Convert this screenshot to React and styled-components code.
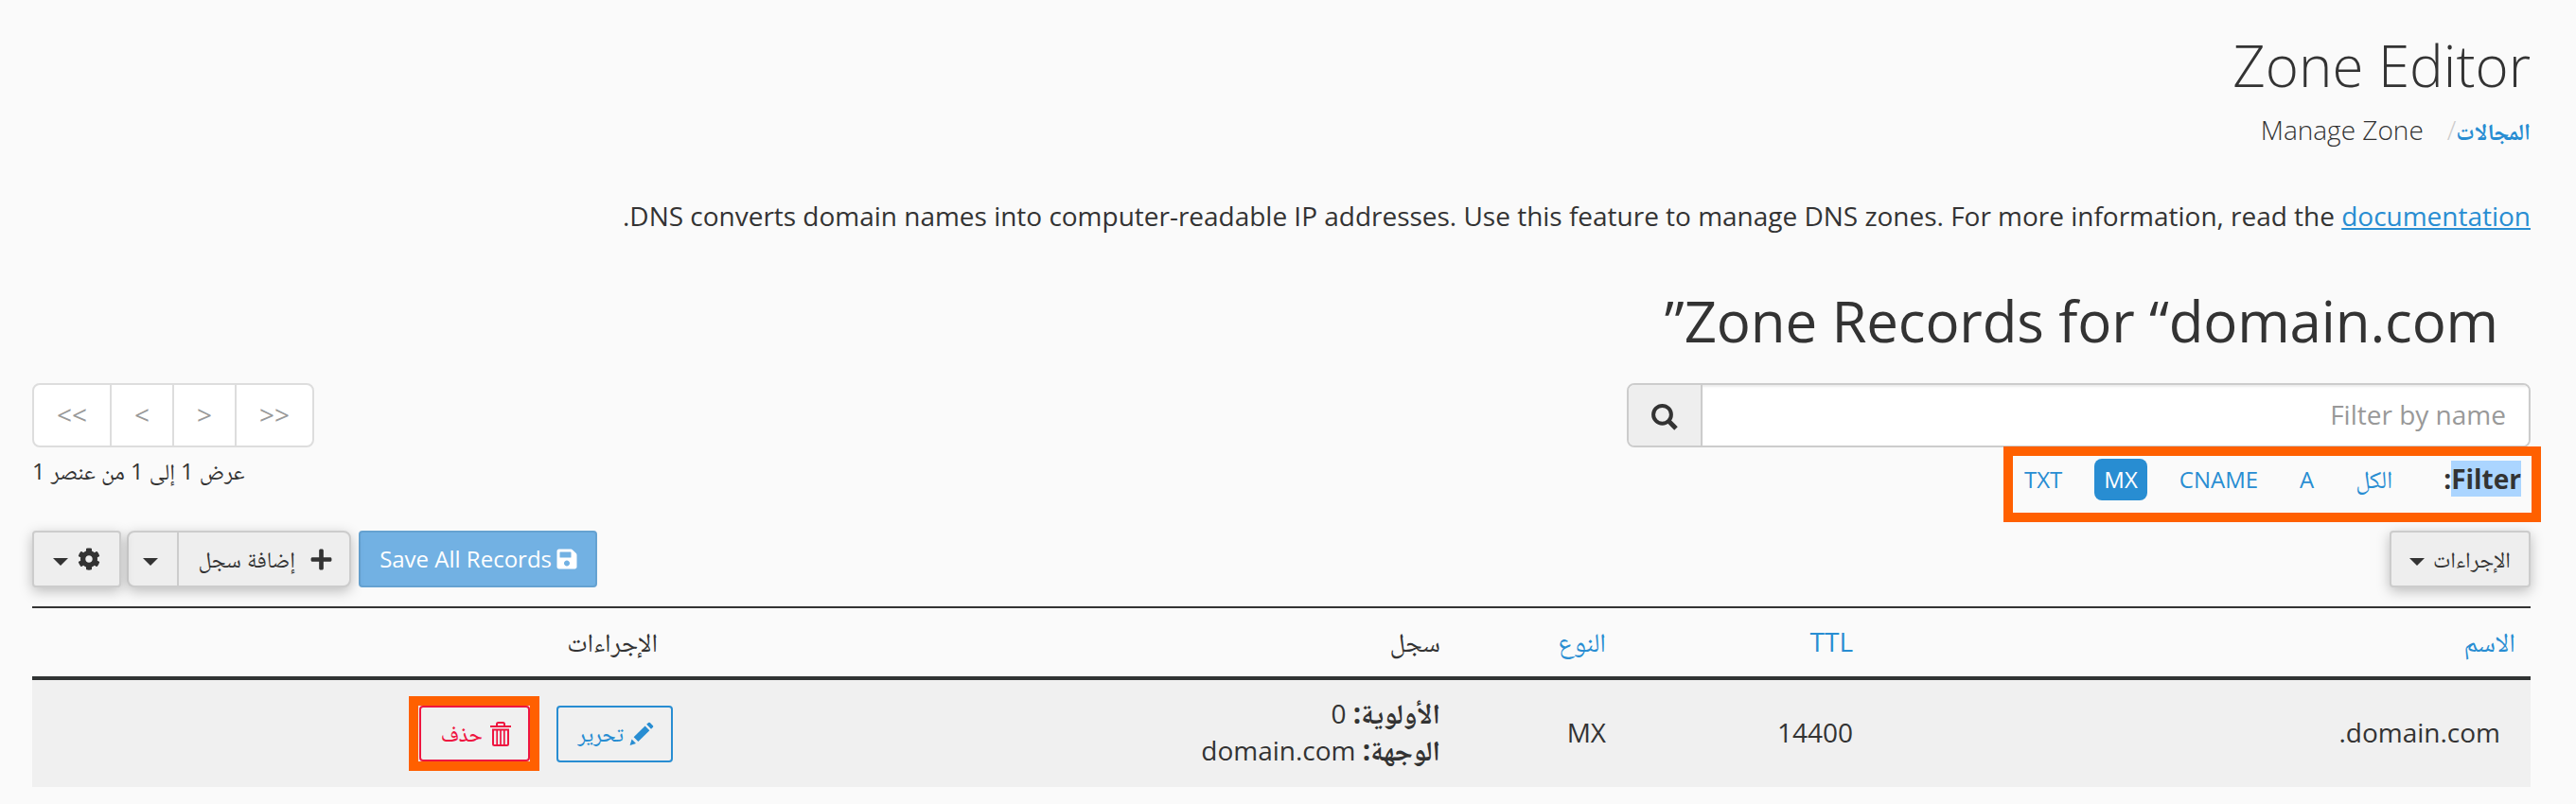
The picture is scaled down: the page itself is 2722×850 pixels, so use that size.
import React from 'react'
import styled, { createGlobalStyle, css } from 'styled-components'
import { FaCog, FaPlus, FaSave } from 'react-icons/fa'

const blue = '#288dd2'
const dark = '#333333'
const orange = '#ff6000'

const SearchIcon = () => (
  <svg width="30" height="30" viewBox="0 0 30 30" fill="none" stroke={dark}>
    <circle cx="12.5" cy="12.3" r="9.4" strokeWidth="4" />
    <path d="M18.6 18.6L27 27" strokeWidth="5" />
  </svg>
)

const PencilIcon = () => (
  <svg width="26" height="26" viewBox="0 0 26 26" fill={blue}>
    <path d="M0.6 25L2.6 18.6L7 23Z" />
    <path d="M4.6 16.2L16.6 4.4L21.4 9.2L9.4 21Z" />
    <path d="M18.2 2.8L20.2 1Q21 0.4 21.8 1L25 4.2Q25.6 5 25 5.8L23 7.7Z" />
  </svg>
)

const TrashIcon = () => (
  <svg width="22" height="26" viewBox="0 0 22 26" fill="none" stroke="#ee1540" strokeWidth="2">
    <path d="M0 5H22" />
    <path d="M7 4.500V2.500Q7 1 8.500 1H13.500Q15 1 15 2.500V4.500" />
    <path d="M3 8.500H19V23.500Q19 25 17.500 25H4.500Q3 25 3 23.500Z" />
    <path d="M7.200 8V24.500M11 8V24.500M14.800 8V24.500" strokeWidth="1.700" />
  </svg>
)

const App = () => {
  return (
    <Page>
      <GlobalStyle />
      <Title>Zone Editor</Title>
      <Breadcrumb>
        <Crumb href="#"><Ar $size={24.5}>المجالات</Ar></Crumb>
        <Slash>/</Slash>
        <Current>Manage Zone</Current>
      </Breadcrumb>
      <Intro>
        DNS converts domain names into computer-readable IP addresses. Use this feature to manage DNS zones. For more information, read the <DocLink href="#">documentation</DocLink>.
      </Intro>
      <Subtitle>Zone Records for “domain.com”</Subtitle>

      <Controls>
        <div>
          <SearchGroup>
            <SearchInput placeholder="Filter by name" />
            <SearchButton><SearchIcon /></SearchButton>
          </SearchGroup>
          <FilterBox>
            <FilterLabel><mark>Filter</mark>:</FilterLabel>
            <Filters>
              <Pill><Ar $size={26}>الكل</Ar></Pill>
              <Pill>A</Pill>
              <Pill>CNAME</Pill>
              <Pill $active>MX</Pill>
              <Pill>TXT</Pill>
            </Filters>
          </FilterBox>
        </div>
        <div>
          <Pager>
            <PageButton $wide>&lt;&lt;</PageButton>
            <PageButton>&lt;</PageButton>
            <PageButton>&gt;</PageButton>
            <PageButton $wide>&gt;&gt;</PageButton>
          </Pager>
          <Count>عرض 1 إلى 1 من عنصر 1</Count>
        </div>
      </Controls>

      <Toolbar>
        <Button $width={149}>
          <Ar $size={23.5}>الإجراءات</Ar>
          <Caret $gap={9} />
        </Button>
        <ToolbarGroup>
          <SaveButton>
            <FaSave size={24} />
            <span>Save All Records</span>
          </SaveButton>
          <ButtonGroup>
            <AddButton>
              <FaPlus size={25} />
              <Ar $size={23.7}>إضافة سجل</Ar>
            </AddButton>
            <ToggleButton><Caret /></ToggleButton>
          </ButtonGroup>
          <Button $width={94}>
            <FaCog size={24} />
            <Caret $gap={10} />
          </Button>
        </ToolbarGroup>
      </Toolbar>

      <Table>
        <HeadRow>
          <HeadCell $sortable><Ar $size={28}>الاسم</Ar></HeadCell>
          <HeadCell $sortable>TTL</HeadCell>
          <HeadCell $sortable><Ar $size={28}>النوع</Ar></HeadCell>
          <HeadCell><Ar $size={28}>سجل</Ar></HeadCell>
          <HeadCell><Ar $size={27.5}>الإجراءات</Ar></HeadCell>
        </HeadRow>
        <Row>
          <NameCell>domain.com.</NameCell>
          <Cell>14400</Cell>
          <Cell>MX</Cell>
          <Cell>
            <RecordLine><b>الأولوية:</b> 0</RecordLine>
            <RecordLine><b>الوجهة:</b> domain.com</RecordLine>
          </Cell>
          <ActionCell>
            <RowButton $color={blue}>
              <PencilIcon />
              <Ar $size={22.5}>تحرير</Ar>
            </RowButton>
            <Highlight>
              <RowButton $color="#ee1540" $danger>
                <TrashIcon />
                <Ar $size={22.5}>حذف</Ar>
              </RowButton>
            </Highlight>
          </ActionCell>
        </Row>
      </Table>
    </Page>
  )
}

const GlobalStyle = createGlobalStyle`
  * {
    box-sizing: border-box;
  }

  body {
    margin: 0;
    background: #fafafa;
  }

  button, input {
    font: inherit;
    color: inherit;
  }
`

const Page = styled.div`
  direction: rtl;
  height: 850px;
  padding: 36px 48px 0 34px;
  overflow: hidden;
  background: #fafafa;
  color: ${dark};
  font-family: "Open Sans", "Noto Naskh Arabic", sans-serif;
  font-size: 28px;
  line-height: 40px;
`

const Ar = styled.span`
  font-size: ${props => props.$size}px;
  line-height: 0;
`

const Title = styled.h1`
  margin: 0;
  font-size: 60px;
  font-weight: 300;
  line-height: 66px;
`

const Breadcrumb = styled.nav`
  display: flex;
  height: 40px;
  margin-top: 15px;
  font-weight: 300;
`

const Crumb = styled.a`
  color: ${blue};
  font-weight: 700;
  text-decoration: none;
`

const Slash = styled.span`
  color: #cccccc;
`

const Current = styled.span`
  margin-right: 25px;
`

const Intro = styled.p`
  margin: 51px 0 0;
  letter-spacing: -0.015px;
`

const DocLink = styled.a`
  color: ${blue};
`

const Subtitle = styled.h2`
  margin: 58px 0 0;
  padding-right: 34px;
  font-size: 60px;
  font-weight: 400;
  letter-spacing: -0.15px;
  line-height: 66px;
`

const Controls = styled.div`
  display: flex;
  justify-content: space-between;
  height: 147px;
  margin-top: 33px;
`

const SearchGroup = styled.div`
  display: flex;
  width: 955px;
  height: 68px;
  border: 2px solid #cccccc;
  border-radius: 8px;
  overflow: hidden;
`

const SearchInput = styled.input`
  flex: 1;
  min-width: 0;
  padding: 0 24px 2px;
  border: 0;
  background: white;
  box-shadow: inset 0 2px 2px rgba(0, 0, 0, 0.075);

  &::placeholder {
    color: #999999;
    opacity: 1;
  }
`

const SearchButton = styled.button`
  width: 78px;
  padding: 0 0 4px;
  border: 0;
  border-right: 2px solid #cccccc;
  background: #eeeeee;

  > svg {
    vertical-align: middle;
  }
`

const FilterBox = styled.div`
  position: relative;
  display: flex;
  justify-content: space-between;
  width: 568px;
  height: 80px;
  margin: -1px -11px 0 0;
  padding: 3px 11px 0 2px;
  border: 10px solid ${orange};
`

const FilterLabel = styled.strong`
  line-height: 43px;

  > mark {
    background: #abd5ff;
    color: inherit;
  }
`

const Filters = styled.div`
  display: flex;
  gap: 24px;
`

const Pill = styled.span`
  height: 44px;
  padding: 0 10px;
  border-radius: 8px;
  color: ${blue};
  font-size: 24px;
  line-height: 44px;

  ${props => props.$active && css`
    background: ${blue};
    color: white;
  `}
`

const Pager = styled.div`
  direction: ltr;
  display: flex;
  width: 298px;
  height: 68px;
  border: 2px solid #dddddd;
  border-radius: 8px;
  background: white;
`

const PageButton = styled.button`
  box-sizing: content-box;
  width: ${props => props.$wide ? 80 : 64}px;
  padding: 0 0 2px;
  height: 62px;
  border: 0;
  background: transparent;
  color: #999999;

  & + & {
    border-left: 2px solid #dddddd;
  }
`

const Count = styled.div`
  margin-top: 5px;
  font-size: 23.8px;
  text-align: left;
`

const Toolbar = styled.div`
  display: flex;
  justify-content: space-between;
  height: 60px;
  margin-top: 9px;
  font-size: 24px;
`

const ToolbarGroup = styled.div`
  display: flex;
`

const raised = css`
  border: 2px solid #cccccc;
  background: #eeeeee;
  box-shadow: 0 4px 14px rgba(0, 0, 0, 0.25);
`

const Button = styled.button`
  display: flex;
  align-items: center;
  justify-content: center;
  width: ${props => props.$width}px;
  padding: 0;
  border-radius: 4px;
  ${raised}
`

const SaveButton = styled.button`
  display: flex;
  align-items: center;
  gap: 4px;
  width: 252px;
  margin-left: 8px;
  padding: 0 18px 0 0;
  border: 2px solid #65a2d1;
  border-radius: 4px;
  background: #72b1e3;
  color: white;
  white-space: nowrap;
`

const ButtonGroup = styled.div`
  display: flex;
  width: 237px;
  margin-left: 6px;
  border-radius: 8px;
  ${raised}
`

const AddButton = styled.button`
  display: flex;
  align-items: center;
  gap: 15px;
  flex: 1;
  padding: 0 17px 0 0;
  border: 0;
  background: transparent;
  white-space: nowrap;
`

const ToggleButton = styled.button`
  display: flex;
  align-items: center;
  justify-content: center;
  width: 53px;
  padding: 0 5px 0 0;
  border: 0;
  border-right: 2px solid #cccccc;
  background: transparent;
`

const Caret = styled.span`
  margin-top: 6px;
  margin-right: ${props => props.$gap || 0}px;
  border-top: 8px solid ${dark};
  border-left: 8px solid transparent;
  border-right: 8px solid transparent;
`

const columns = '700px 261px 175px 827px 677px'

const Table = styled.div`
  margin-top: 20px;
  border-top: 2px solid #333333;
`

const HeadRow = styled.div`
  display: grid;
  grid-template-columns: ${columns};
  height: 76px;
  padding-top: 15px;
  border-bottom: 4px solid #303333;
`

const HeadCell = styled.div`
  padding-right: 16px;
  color: ${props => props.$sortable ? blue : dark};
`

const Row = styled.div`
  display: grid;
  grid-template-columns: ${columns};
  align-items: center;
  height: 113px;
  background: #f0f0f0;
`

const Cell = styled.div`
  padding: 0 16px 3px 0;
`

const NameCell = styled(Cell)`
  padding-right: 32px;
`

const RecordLine = styled.div`
  line-height: 39px;

  > b {
    font-size: 29.5px;
    line-height: 0;
  }
`

const ActionCell = styled.div`
  display: flex;
  align-items: center;
  gap: 18px;
`

const RowButton = styled.button`
  display: flex;
  align-items: center;
  gap: ${props => props.$danger ? 8 : 6}px;
  width: ${props => props.$danger ? 117 : 123}px;
  height: ${props => props.$danger ? 59 : 60}px;
  padding: 0 18px 0 0;
  border: 2px solid ${props => props.$color};
  border-radius: 4px;
  background: transparent;
  color: ${props => props.$color};
  font-weight: 500;
`

const Highlight = styled.div`
  width: 138px;
  height: 79px;
  border: 10px solid ${orange};
`

export default App
